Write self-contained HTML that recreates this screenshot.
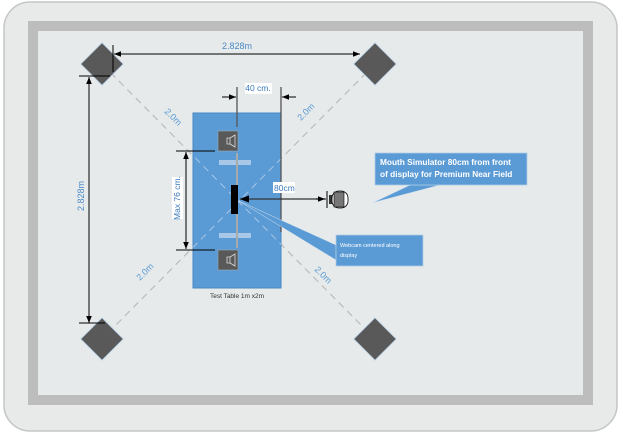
<!DOCTYPE html>
<html><head><meta charset="utf-8"><style>
html,body{margin:0;padding:0;background:#fff;width:623px;height:438px;overflow:hidden}
text{font-family:"Liberation Sans",sans-serif}
</style></head><body>
<svg width="623" height="438" viewBox="0 0 623 438" xmlns="http://www.w3.org/2000/svg">
<defs>
<marker id="ah" viewBox="0 0 10 10" refX="10" refY="5" markerWidth="7" markerHeight="7" orient="auto-start-reverse"><path d="M0,1 L10,5 L0,9 z" fill="#000"/></marker>
<clipPath id="tb"><rect x="193" y="113" width="88" height="175"/></clipPath>
</defs>
<rect x="4" y="2" width="613" height="429" rx="26" fill="#e8eaea" stroke="#c4c6c6" stroke-width="1.5"/>
<rect x="33" y="26" width="555" height="374" fill="none" stroke="#bdbdbd" stroke-width="10"/>
<rect x="38" y="31" width="545" height="364" fill="#e7eaea"/>
<g stroke="#bbbbbb" stroke-width="1.2" stroke-dasharray="7,5">
<line x1="102" y1="64" x2="375" y2="339"/>
<line x1="375" y1="64" x2="102" y2="339"/>
</g>
<rect x="193" y="113" width="88" height="175" fill="#5b9bd5" stroke="#4a88c2" stroke-width="1"/>
<g stroke="#a8c6e4" stroke-width="1" stroke-dasharray="7,5" clip-path="url(#tb)">
<line x1="102" y1="64" x2="375" y2="339"/>
<line x1="375" y1="64" x2="102" y2="339"/>
</g>
<text x="237" y="298" font-size="6.5" text-anchor="middle" fill="#333">Test Table 1m x2m</text>
<g fill="#5b9bd5" font-size="9">
<text transform="translate(164,112) rotate(45)">2.0m</text>
<text transform="translate(301,121) rotate(-45)">2.0m</text>
<text transform="translate(140,281) rotate(-45)">2.0m</text>
<text transform="translate(314,270) rotate(45)">2.0m</text>
</g>
<g fill="#595959" stroke="#b8d0e8" stroke-width="0.8">
<rect x="87" y="49" width="30" height="30" transform="rotate(45 102 64)"/>
<rect x="360" y="49" width="30" height="30" transform="rotate(45 375 64)"/>
<rect x="87" y="324" width="30" height="30" transform="rotate(45 102 339)"/>
<rect x="360" y="324" width="30" height="30" transform="rotate(45 375 339)"/>
</g>
<g stroke="#000" stroke-width="1">
<line x1="113" y1="45" x2="113" y2="72"/>
<line x1="79" y1="76" x2="110" y2="76"/>
<line x1="114" y1="54" x2="360" y2="54" marker-start="url(#ah)" marker-end="url(#ah)"/>
<line x1="89" y1="77" x2="89" y2="323" marker-start="url(#ah)" marker-end="url(#ah)"/>
<line x1="79" y1="323" x2="105" y2="323"/>
</g>
<rect x="218" y="40" width="38" height="11" fill="#e7eaea"/>
<text x="237" y="49" font-size="9" text-anchor="middle" fill="#4a8ac8">2.828m</text>
<rect x="76" y="178" width="10" height="36" fill="#e7eaea"/>
<text transform="translate(84,196) rotate(-90)" font-size="9" text-anchor="middle" fill="#4a8ac8">2.828m</text>
<g stroke="#555" stroke-width="1.3">
<line x1="237" y1="87" x2="237" y2="127"/>
<line x1="281" y1="87" x2="281" y2="232"/>
</g>
<g stroke="#000" stroke-width="1">
<line x1="222" y1="97" x2="236" y2="97" marker-end="url(#ah)"/>
<line x1="296" y1="97" x2="282" y2="97" marker-end="url(#ah)"/>
</g>
<rect x="245" y="83" width="27" height="11" fill="#fff"/>
<text x="258" y="91" font-size="8.5" text-anchor="middle" fill="#3a7abd">40 cm.</text>
<rect x="219" y="160" width="32" height="5" fill="#a9c8e8"/>
<rect x="219" y="233" width="32" height="5" fill="#a9c8e8"/>
<line x1="237" y1="153" x2="237" y2="248" stroke="#aaa" stroke-width="2"/>
<g fill="#595959" stroke="#9ab" stroke-width="0.6">
<rect x="218" y="131" width="20" height="20"/>
<rect x="218" y="250" width="20" height="20"/>
</g>
<g stroke="#ddd" stroke-width="0.8" fill="none">
<path d="M227,138 h3 v6 h-3 z M230,138 l5,-3 v12 l-5,-3"/>
<path d="M227,257 h3 v6 h-3 z M230,257 l5,-3 v12 l-5,-3"/>
</g>
<g stroke="#000" stroke-width="1">
<line x1="176" y1="151" x2="215" y2="151"/>
<line x1="176" y1="250" x2="215" y2="250"/>
<line x1="186" y1="152" x2="186" y2="249" marker-start="url(#ah)" marker-end="url(#ah)"/>
</g>
<rect x="172" y="177" width="11" height="42" fill="#fff"/>
<text transform="translate(180,198) rotate(-90)" font-size="8.5" text-anchor="middle" fill="#3a7abd">Max 76 cm.</text>
<rect x="231" y="185" width="7" height="29" fill="#000"/>
<line x1="326" y1="199" x2="240" y2="199" stroke="#333" stroke-width="1.3" marker-end="url(#ah)"/>
<line x1="316" y1="199" x2="325" y2="199" stroke="#000" stroke-width="1" marker-end="url(#ah)"/>
<rect x="273" y="182" width="22" height="11" fill="#fff"/>
<text x="274" y="191" font-size="8.5" fill="#3a7abd">80cm</text>
<line x1="327" y1="191" x2="327" y2="208" stroke="#000" stroke-width="1"/>
<rect x="329" y="195" width="4" height="9" fill="#333"/>
<rect x="332" y="191" width="16" height="17" rx="7" fill="#fff" stroke="#000" stroke-width="0.8"/>
<rect x="334" y="192" width="10" height="15" fill="#777" stroke="#000" stroke-width="0.6"/>
<polygon points="372,203 410,185 440,185" fill="#5b9bd5" stroke="#d0e0f0" stroke-width="0.6"/>
<rect x="375" y="153" width="152" height="32" fill="#5b9bd5" stroke="#b0cce8" stroke-width="0.8"/>
<text x="380" y="165" font-size="8.3" font-weight="bold" fill="#fff">Mouth Simulator 80cm from front</text>
<text x="380" y="177" font-size="8.3" font-weight="bold" fill="#fff">of display for Premium Near Field</text>
<polygon points="239,201 336,245 336,260" fill="#5b9bd5" stroke="#d0e0f0" stroke-width="0.5"/>
<rect x="336" y="235" width="87" height="31" fill="#5b9bd5" stroke="#b0cce8" stroke-width="0.8"/>
<text x="340" y="247" font-size="5.5" fill="#fff">Webcam centered along</text>
<text x="340" y="257" font-size="5.5" fill="#fff">display</text>
</svg>
</body></html>
